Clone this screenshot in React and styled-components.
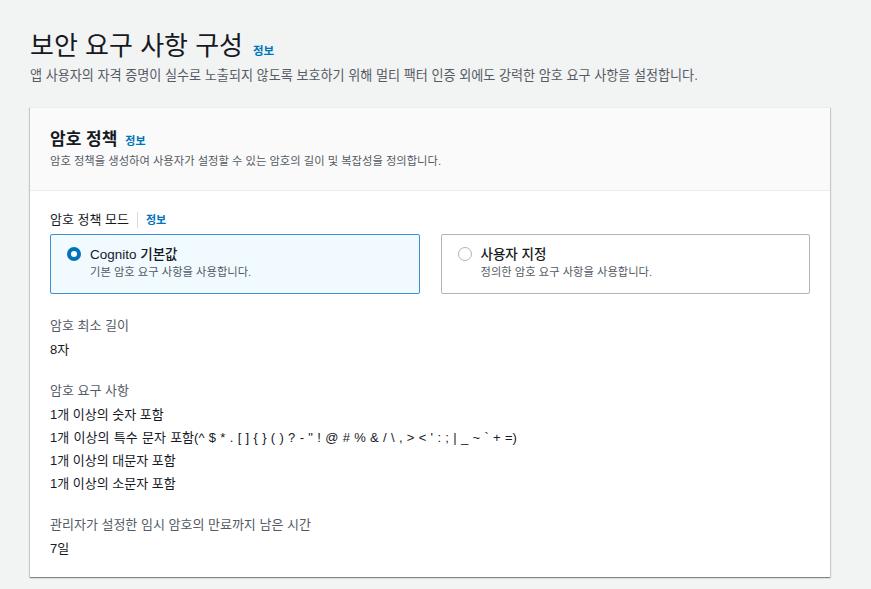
import React from 'react'
import styled, { createGlobalStyle } from 'styled-components'

const GlobalStyle = createGlobalStyle`
  html, body {
    margin: 0;
    padding: 0;
    background: #f2f3f3;
  }
  body {
    font-family: "Liberation Sans", "Noto Sans CJK KR", sans-serif;
    color: #16191f;
  }
`

const Page = styled.div`
  padding: 0 41px 12px 30px;
`

const Crumb = styled.div`
  height: 44px;
  margin-top: -16px;
  font-size: 13px;
  line-height: 20px;
  color: #545b64;
  overflow: hidden;
`

const TitleRow = styled.div`
  display: flex;
  align-items: baseline;
  gap: 10px;
`

const Title = styled.h1`
  margin: 0;
  font-size: 26px;
  font-weight: 400;
  line-height: 36px;
  color: #16191f;
`

const Info = styled.a`
  font-size: ${p => p.$size || 11}px;
  font-weight: 700;
  color: #0073bb;
  text-decoration: none;
`

const PageDesc = styled.p`
  margin: 2px 0 0;
  font-size: 13.1px;
  line-height: 20px;
  color: #545b64;
`

const Card = styled.section`
  margin-top: 21px;
  background: #fff;
  border-top: 1px solid #eaeded;
  box-shadow: 0 1px 1px 0 rgba(0, 28, 36, 0.3), 1px 1px 1px 0 rgba(0, 28, 36, 0.15),
    -1px 1px 1px 0 rgba(0, 28, 36, 0.15);
`

const CardHeader = styled.header`
  background: #fafafa;
  border-bottom: 1px solid #eaeded;
  padding: 21px 20px 20px;
`

const CardTitleRow = styled.div`
  display: flex;
  align-items: baseline;
  gap: 8px;
`

const CardTitle = styled.h2`
  margin: 0;
  font-size: 17px;
  font-weight: 700;
  line-height: 22px;
`

const CardDesc = styled.p`
  margin: 2px 0 0;
  font-size: 11.3px;
  line-height: 17px;
  color: #545b64;
`

const CardBody = styled.div`
  padding: 20px 20px 17px;
  display: flex;
  flex-direction: column;
`

const ModeLabel = styled.div`
  display: flex;
  align-items: center;
  font-size: 13px;
  line-height: 18px;
  color: #16191f;
`

const Divider = styled.span`
  width: 1px;
  height: 16px;
  background: #d5dbdb;
  margin: 0 8px 0 8px;
`

const Tiles = styled.div`
  margin-top: 5px;
  display: grid;
  grid-template-columns: 1fr 1fr;
  gap: 21px;
`

const Tile = styled.label`
  display: flex;
  gap: 9px;
  height: 60px;
  box-sizing: border-box;
  padding: 10px 16px;
  border-radius: 2px;
  border: 1px solid ${p => (p.$checked ? '#3f8fd0' : '#aab7b8')};
  background: ${p => (p.$checked ? '#f1faff' : '#fff')};
`

const Radio = styled.span`
  flex: none;
  margin-top: 2px;
  width: 14px;
  height: 14px;
  box-sizing: border-box;
  border-radius: 50%;
  border: ${p => (p.$checked ? '4px solid #0073bb' : '1px solid #aab7b8')};
  background: #fff;
`

const TileTexts = styled.div`
  display: flex;
  flex-direction: column;
`

const TileTitle = styled.span`
  font-size: 13.5px;
  font-weight: 500;
  line-height: 19px;
  color: #16191f;
`

const TileDesc = styled.span`
  font-size: 11.3px;
  line-height: 17px;
  color: #545b64;
`

const Field = styled.div`
  margin-top: ${p => p.$top || 21}px;
`

const FieldLabel = styled.div`
  font-size: 13px;
  line-height: 18px;
  color: #545b64;
`

const FieldValue = styled.div`
  margin-top: 3px;
  font-size: 13px;
  line-height: 23px;
  color: #16191f;
`

const Line = styled.div`
  word-spacing: ${p => p.$spread || 0}px;
`

const App = () => {
  return (
    <>
      <GlobalStyle />
      <Page>
        <Crumb>사용자 풀 생성</Crumb>
        <TitleRow>
          <Title>보안 요구 사항 구성</Title>
          <Info href="#" $size={11.5}>정보</Info>
        </TitleRow>
        <PageDesc>
          앱 사용자의 자격 증명이 실수로 노출되지 않도록 보호하기 위해 멀티 팩터 인증 외에도 강력한 암호 요구 사항을 설정합니다.
        </PageDesc>

        <Card>
          <CardHeader>
            <CardTitleRow>
              <CardTitle>암호 정책</CardTitle>
              <Info href="#">정보</Info>
            </CardTitleRow>
            <CardDesc>암호 정책을 생성하여 사용자가 설정할 수 있는 암호의 길이 및 복잡성을 정의합니다.</CardDesc>
          </CardHeader>

          <CardBody>
            <ModeLabel>
              암호 정책 모드
              <Divider />
              <Info href="#">정보</Info>
            </ModeLabel>
            <Tiles>
              <Tile $checked>
                <Radio $checked />
                <TileTexts>
                  <TileTitle>Cognito 기본값</TileTitle>
                  <TileDesc>기본 암호 요구 사항을 사용합니다.</TileDesc>
                </TileTexts>
              </Tile>
              <Tile>
                <Radio />
                <TileTexts>
                  <TileTitle>사용자 지정</TileTitle>
                  <TileDesc>정의한 암호 요구 사항을 사용합니다.</TileDesc>
                </TileTexts>
              </Tile>
            </Tiles>

            <Field $top={23}>
              <FieldLabel>암호 최소 길이</FieldLabel>
              <FieldValue>8자</FieldValue>
            </Field>

            <Field>
              <FieldLabel>암호 요구 사항</FieldLabel>
              <FieldValue>
                <Line>1개 이상의 숫자 포함</Line>
                <Line $spread={0.7}>1개 이상의 특수 문자 포함(^ $ * . [ ] {'{'} {'}'} ( ) ? - " ! @ # % &amp; / \ , &gt; &lt; ' : ; | _ ~ ` + =)</Line>
                <Line>1개 이상의 대문자 포함</Line>
                <Line>1개 이상의 소문자 포함</Line>
              </FieldValue>
            </Field>

            <Field>
              <FieldLabel>관리자가 설정한 임시 암호의 만료까지 남은 시간</FieldLabel>
              <FieldValue>7일</FieldValue>
            </Field>
          </CardBody>
        </Card>
      </Page>
    </>
  )
}

export default App
